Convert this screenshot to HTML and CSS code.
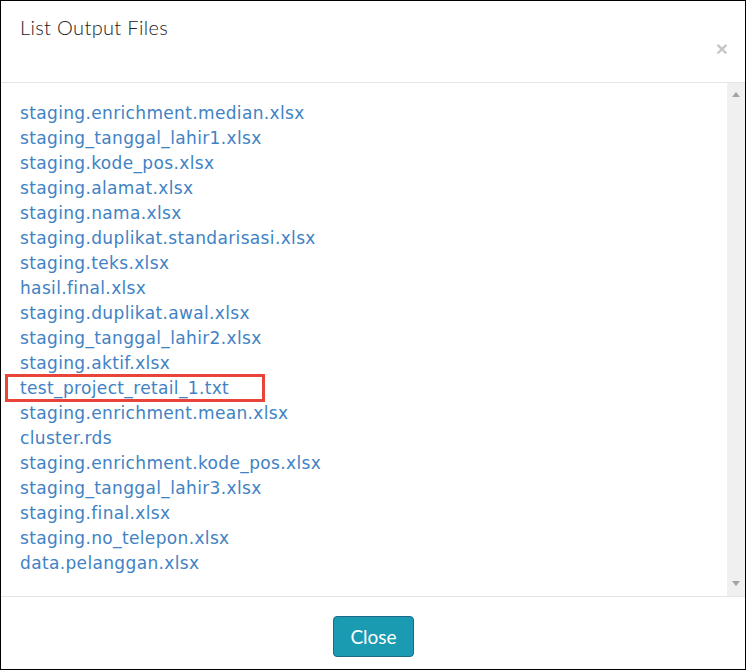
FILE: index.html
```html
<!DOCTYPE html>
<html>
<head>
<meta charset="utf-8">
<link rel="stylesheet" href="styles.css">
</head>
<body>
<div class="modal">
  <div class="modal-header">
    <h4 class="title">List Output Files</h4>
    <span class="close">&times;</span>
  </div>
  <div class="modal-body">
    <ul class="files">
      <li><a href="#">staging.enrichment.median.xlsx</a></li>
      <li><a href="#">staging_tanggal_lahir1.xlsx</a></li>
      <li><a href="#">staging.kode_pos.xlsx</a></li>
      <li><a href="#">staging.alamat.xlsx</a></li>
      <li><a href="#">staging.nama.xlsx</a></li>
      <li><a href="#">staging.duplikat.standarisasi.xlsx</a></li>
      <li><a href="#">staging.teks.xlsx</a></li>
      <li><a href="#">hasil.final.xlsx</a></li>
      <li><a href="#">staging.duplikat.awal.xlsx</a></li>
      <li><a href="#">staging_tanggal_lahir2.xlsx</a></li>
      <li><a href="#">staging.aktif.xlsx</a></li>
      <li class="marked"><a href="#">test_project_retail_1.txt</a></li>
      <li><a href="#">staging.enrichment.mean.xlsx</a></li>
      <li><a href="#">cluster.rds</a></li>
      <li><a href="#">staging.enrichment.kode_pos.xlsx</a></li>
      <li><a href="#">staging_tanggal_lahir3.xlsx</a></li>
      <li><a href="#">staging.final.xlsx</a></li>
      <li><a href="#">staging.no_telepon.xlsx</a></li>
      <li><a href="#">data.pelanggan.xlsx</a></li>
    </ul>
    <div class="scrollbar">
      <span class="arrow up"></span>
      <span class="arrow down"></span>
    </div>
  </div>
  <div class="modal-footer">
    <button class="btn-close">Close</button>
  </div>
</div>
</body>
</html>
```
FILE: styles.css
```css
*, *::before, *::after { box-sizing: border-box; }
html, body { margin: 0; padding: 0; background: #fff; }
.modal {
  width: 746px;
  height: 670px;
  border: 1px solid #000;
  display: flex;
  flex-direction: column;
  background: #fff;
}
.modal-header {
  height: 82px;
  border-bottom: 1px solid #e5e5e5;
  padding: 14px 17px 0 19px;
  display: flex;
  flex-direction: column;
}
.title {
  margin: 0;
  font-family: Lato, "Liberation Sans", sans-serif;
  font-weight: 300;
  font-size: 20px;
  letter-spacing: 0.35px;
  line-height: 24px;
  color: #222;
}
.close {
  align-self: flex-end;
  margin-top: -1px;
  font-family: "Liberation Sans", Arial, sans-serif;
  font-weight: bold;
  font-size: 21px;
  line-height: 21px;
  color: #000;
  opacity: 0.22;
}
.modal-body {
  height: 514px;
  border-bottom: 1px solid #e5e5e5;
  display: flex;
}
.files {
  flex: 1;
  list-style: none;
  margin: 0;
  padding: 18px 0 0 19px;
  font-family: "DejaVu Sans", sans-serif;
  font-size: 17px;
  letter-spacing: 0.35px;
  line-height: 25px;
}
.files li { position: relative; }
.files a {
  color: #4182c4;
  text-decoration: none;
}
.marked::before {
  content: "";
  position: absolute;
  left: -15px;
  top: -2px;
  width: 260px;
  height: 28px;
  border: 3px solid #e8443a;
}
.scrollbar {
  width: 18px;
  background: #f0f0f0;
  display: flex;
  flex-direction: column;
  justify-content: space-between;
  align-items: center;
  padding: 9px 0 10px;
}
.arrow {
  width: 0;
  height: 0;
  border-left: 4.5px solid transparent;
  border-right: 4.5px solid transparent;
}
.arrow.up { border-bottom: 5px solid #a3a3a3; }
.arrow.down { border-top: 5px solid #a3a3a3; }
.modal-footer {
  flex: 1;
  display: flex;
  justify-content: center;
  align-items: flex-start;
  padding-top: 19px;
}
.btn-close {
  width: 81px;
  height: 41px;
  margin-left: 1px;
  background: #1a9bb2;
  border: 1px solid #1c6a8a;
  border-radius: 4px;
  color: #fff;
  font-family: Lato, "Liberation Sans", sans-serif;
  font-size: 19px;
  padding: 0;
}
```
